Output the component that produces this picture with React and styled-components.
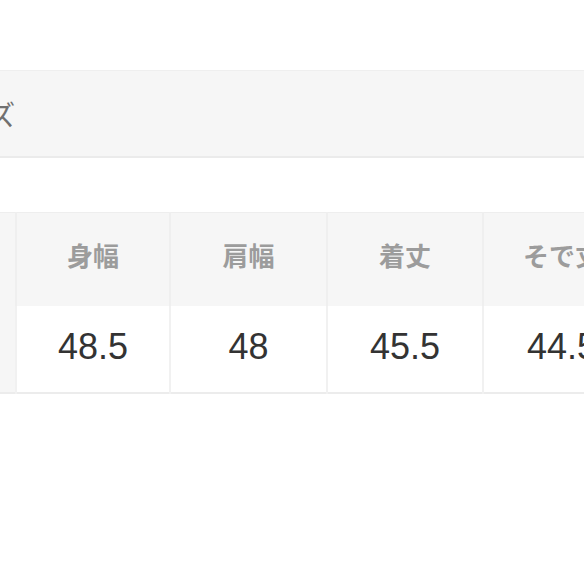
import React from "react";
import styled, { createGlobalStyle } from "styled-components";

const Global = createGlobalStyle`
  html, body { margin: 0; padding: 0; background: #fff; }
  body { font-family: "Liberation Sans", "Noto Sans CJK JP", sans-serif; }
`;

const Page = styled.div`
  width: 584px;
  height: 584px;
  overflow: hidden;
  padding-top: 70px;
  box-sizing: border-box;
`;

const SectionBar = styled.div`
  height: 88px;
  box-sizing: border-box;
  background: #f6f6f6;
  border-top: 1px solid #efefef;
  border-bottom: 2px solid #ebebeb;
  display: flex;
  align-items: center;
`;

const SectionTitle = styled.span`
  margin-left: -68px;
  font-family: "Noto Sans CJK JP", sans-serif;
  font-size: 28px;
  color: #707070;
  white-space: nowrap;
`;

const TableWrap = styled.div`
  margin-top: 54px;
  overflow: hidden;
`;

const Table = styled.table`
  width: 640px;
  border-collapse: collapse;
  table-layout: fixed;
  border-top: 1px solid #eeeeee;
  border-bottom: 2px solid #ececec;
`;

const Head = styled.th`
  height: 93px;
  padding: 0 0 9px;
  box-sizing: border-box;
  background: #f6f6f6;
  border-left: 2px solid #efefef;
  font-family: "Noto Sans CJK JP", sans-serif;
  font-weight: 700;
  font-size: 26px;
  color: #9c9c9c;
  text-align: center;
  vertical-align: middle;
  white-space: nowrap;
  overflow: hidden;
  &:first-child { border-left: none; }
`;

const Cell = styled.td`
  height: 87px;
  padding: 0 0 3px;
  box-sizing: border-box;
  background: ${(p) => (p.$label ? "#f6f6f6" : "#fff")};
  border-left: 2px solid #f1f1f1;
  font-family: "Liberation Sans", Arial, sans-serif;
  font-size: 36px;
  color: #333;
  text-align: center;
  vertical-align: middle;
  white-space: nowrap;
  overflow: hidden;
  &:first-child { border-left: none; }
`;

const headers = ["身幅", "肩幅", "着丈", "そで丈"];
const values = ["48.5", "48", "45.5", "44.5"];
const widths = [16, 154, 157, 156, 157];

export default function App() {
  return (
    <>
      <Global />
      <Page>
        <SectionBar>
          <SectionTitle>サイズ</SectionTitle>
        </SectionBar>
        <TableWrap>
          <Table>
            <colgroup>
              {widths.map((w, i) => (
                <col key={i} style={{ width: w }} />
              ))}
            </colgroup>
            <thead>
              <tr>
                <Head></Head>
                {headers.map((h) => (
                  <Head key={h}>{h}</Head>
                ))}
              </tr>
            </thead>
            <tbody>
              <tr>
                <Cell $label></Cell>
                {values.map((v) => (
                  <Cell key={v}>{v}</Cell>
                ))}
              </tr>
            </tbody>
          </Table>
        </TableWrap>
      </Page>
    </>
  );
}
